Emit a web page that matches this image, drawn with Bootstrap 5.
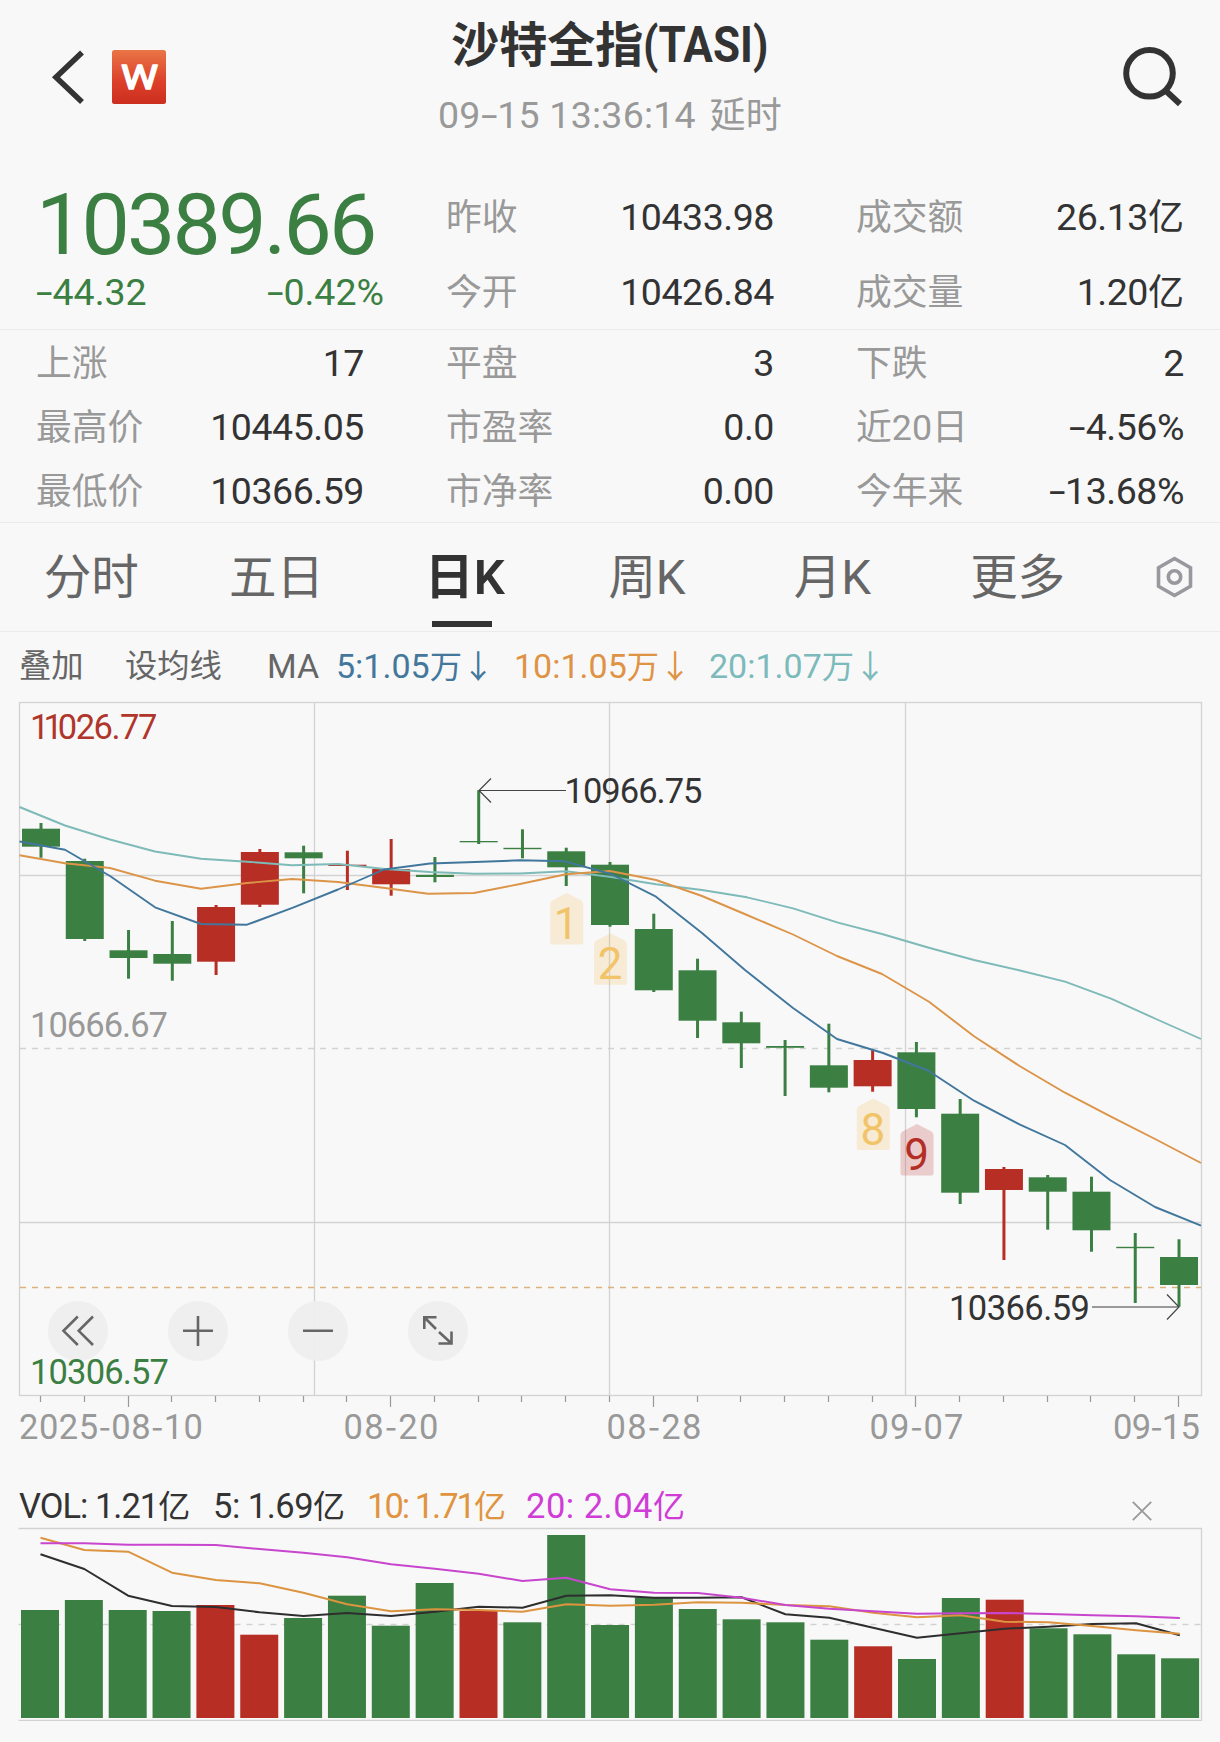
<!DOCTYPE html>
<html lang="zh-CN">
<head>
<meta charset="utf-8">
<meta name="viewport" content="width=device-width, initial-scale=1">
<title>沙特全指(TASI)</title>
<link href="https://cdn.jsdelivr.net/npm/bootstrap@5.3.0/dist/css/bootstrap.min.css" rel="stylesheet">
<style>
  body { background:#f8f8f8; color:#333; font-family:Roboto,"Noto Sans CJK SC",sans-serif; width:1220px; height:1742px; overflow:hidden; }
  svg { display:block; }
  svg text { font-family:Roboto,"Noto Sans CJK SC",sans-serif; }
  .hy { display:inline-block; width:.44em; text-align:center; letter-spacing:0; transform:scaleX(1.6); }
  .topbar { height:160px; padding:0 36px; }
  .side { width:220px; height:154px; }
  .side.back { padding-left:12px; }
  .idx-title { font-size:48px; font-weight:700; line-height:60px; margin-top:16px; white-space:nowrap; }
  .idx-title .lat { display:inline-block; transform:scaleX(.88); transform-origin:0 50%; margin-right:-17px; font-size:50px; line-height:50px; }
  .idx-time { font-size:37.5px; line-height:48px; margin-top:15px; color:#999; letter-spacing:.25px; white-space:nowrap; }
  .cjk36 { font-size:36px; }
  .idx-time .cjk36 { margin-left:4px; }
  .quote { height:170px; padding:0 36px; gap:82px; border-bottom:1.5px solid #ebebeb; }
  .quote > div, .facts > div { flex:1 1 0; min-width:0; }
  .price { font-size:86px; line-height:86px; letter-spacing:-2.8px; margin:22px 0 0 0; }
  .chg { font-size:37.5px; line-height:48px; margin-right:-20px; }
  .up-green { color:#3b7f43; }
  .kv { font-size:37.5px; white-space:nowrap; letter-spacing:-.45px; }
  .kv .k, .kv .cjk36 { letter-spacing:0; }
  .kv .k { font-size:35.8px; color:#999; padding-top:3px; }
  .quote .kv { height:75px; }
  .quote .kvs { padding-top:20px; }
  .facts { height:193px; padding:0 36px; gap:82px; border-bottom:1.5px solid #ebebeb; }
  .facts .kv { height:64px; }
  .facts .kvs { padding-top:1px; }
  .facts .kv .k { padding-top:4px; }
  .ktabs { height:109px; border-bottom:1.5px solid #ebebeb; color:#666; font-size:47.5px; }
  .ktabs .nav-link { color:#666; padding:0; width:185.3px; text-align:center; line-height:110px; height:108px; position:relative; left:-1.5px; white-space:nowrap; }
  .ktabs .nav-link.active { color:#333; font-weight:600; font-size:49px; padding-left:6px; }
  .ktabs .nav-link.active::after { content:""; position:absolute; left:50%; margin-left:-30px; bottom:4px; width:60px; height:6px; background:#333; }
  .malegend { height:68px; font-size:34px; color:#666; padding-left:19px; white-space:nowrap; }
  .malegend .zh { font-size:32.3px; }
  .vollegend { height:61px; font-size:34.5px; padding:22px 68px 0 19px; margin-top:-1px; white-space:nowrap; }
  .vollegend .zh { font-size:32px; }
  .vollegend svg { position:relative; top:4px; }
</style>
</head>
<body>
<header class="topbar d-flex justify-content-between">
  <div class="side back d-flex align-items-center">
    <svg width="120" height="60" viewBox="48 47 120 60">
      <defs><linearGradient id="wg" x1="0" y1="0" x2="0" y2="1"><stop offset="0" stop-color="#ea7546"/><stop offset=".6" stop-color="#db3f29"/><stop offset="1" stop-color="#cd2e1f"/></linearGradient></defs>
      <path d="M82 52.500L56 77.200L82 102" fill="none" stroke="#333" stroke-width="5.600"/>
      <rect x="112" y="50" width="54" height="54" rx="2.500" fill="url(#wg)"/>
      <text x="121" y="89" font-size="34" font-weight="400" fill="#fff" stroke="#fff" stroke-width="1.500" stroke-linejoin="round" textLength="37" lengthAdjust="spacingAndGlyphs">W</text>
    </svg>
  </div>
  <div class="text-center">
    <div class="idx-title">沙特全指<span class="lat">(TASI)</span></div>
    <div class="idx-time">09<span class="hy">-</span>15 13:36:14 <span class="cjk36">延时</span></div>
  </div>
  <div class="side d-flex align-items-center justify-content-end">
    <svg width="62" height="62" viewBox="1123 46 62 62" fill="none" stroke="#333" stroke-width="6"><circle cx="1150.500" cy="73.300" r="23.300"/><path d="M1166.500 90.500L1181 104"/></svg>
  </div>
</header>

<section class="quote d-flex">
  <div class="up-green">
    <div class="price">10389.66</div>
    <div class="chg d-flex justify-content-between"><span><span class="hy">-</span>44.32</span><span><span class="hy">-</span>0.42%</span></div>
  </div>
  <div class="kvs">
    <div class="kv d-flex justify-content-between align-items-center"><span class="k">昨收</span><span>10433.98</span></div>
    <div class="kv d-flex justify-content-between align-items-center"><span class="k">今开</span><span>10426.84</span></div>
  </div>
  <div class="kvs">
    <div class="kv d-flex justify-content-between align-items-center"><span class="k">成交额</span><span>26.13<span class="cjk36">亿</span></span></div>
    <div class="kv d-flex justify-content-between align-items-center"><span class="k">成交量</span><span>1.20<span class="cjk36">亿</span></span></div>
  </div>
</section>

<section class="facts d-flex">
  <div class="kvs">
    <div class="kv d-flex justify-content-between align-items-center"><span class="k">上涨</span><span>17</span></div>
    <div class="kv d-flex justify-content-between align-items-center"><span class="k">最高价</span><span>10445.05</span></div>
    <div class="kv d-flex justify-content-between align-items-center"><span class="k">最低价</span><span>10366.59</span></div>
  </div>
  <div class="kvs">
    <div class="kv d-flex justify-content-between align-items-center"><span class="k">平盘</span><span>3</span></div>
    <div class="kv d-flex justify-content-between align-items-center"><span class="k">市盈率</span><span>0.0</span></div>
    <div class="kv d-flex justify-content-between align-items-center"><span class="k">市净率</span><span>0.00</span></div>
  </div>
  <div class="kvs">
    <div class="kv d-flex justify-content-between align-items-center"><span class="k">下跌</span><span>2</span></div>
    <div class="kv d-flex justify-content-between align-items-center"><span class="k">近20日</span><span><span class="hy">-</span>4.56%</span></div>
    <div class="kv d-flex justify-content-between align-items-center"><span class="k">今年来</span><span><span class="hy">-</span>13.68%</span></div>
  </div>
</section>

<nav class="ktabs nav flex-nowrap align-items-center">
  <a class="nav-link">分时</a>
  <a class="nav-link">五日</a>
  <a class="nav-link active">日K</a>
  <a class="nav-link">周K</a>
  <a class="nav-link">月K</a>
  <a class="nav-link">更多</a>
  <svg class="ms-auto me-4" width="38" height="44" viewBox="1158.500 555 38 44" fill="none" stroke="#98989e" overflow="visible"><path d="M1175 558.500L1191 567.800V586.200L1175 595.500L1159 586.200V567.800Z" stroke-width="3.600"/><circle cx="1175" cy="577" r="6.200" stroke-width="3.600"/></svg>
</nav>

<div class="malegend d-flex align-items-center">
  <span class="zh" style="width:106px">叠加</span>
  <span class="zh" style="width:142px">设均线</span>
  <span style="width:69px">MA</span>
  <span style="width:178px;color:#44779c">5:1.05<span class="zh">万↓</span></span>
  <span style="width:195px;color:#df9345">10:1.05<span class="zh">万↓</span></span>
  <span style="color:#7cbabb">20:1.07<span class="zh">万↓</span></span>
</div>

<svg id="kline" width="1220" height="766" viewBox="0 700 1220 766" fill="none">
  <g stroke="#d2d2d2" stroke-width="1.300">
    <rect x="19.500" y="702.500" width="1182" height="693"/>
    <path d="M314.500 702V1395M609.500 702V1395M905.500 702V1395M20 875.500H1201M20 1222.500H1201"/>
    <path d="M20 1048.500H1201" stroke-dasharray="6 6"/>
  </g>
  <path d="M20 1287.500H1201" stroke="#dcb27c" stroke-width="1.300" stroke-dasharray="6 6"/>
  <g id="candles"></g>
  <g stroke-width="1.900" stroke-linejoin="round">
    <polyline stroke="#7dbab8" points="19.5,807 65,825.5 110,839.5 155,851.5 201,858.7 247,861.7 292,865.3 338,864 385,869 430,872 474,873.7 520,873.5 566,871.3 611,877 656,884.3 702,890 747,897.3 793,908.3 838,922.7 882,934 928,947.5 974,960 1020,970.5 1065,981.7 1111,998.7 1156,1019 1201,1039"/>
    <polyline stroke="#dc9448" points="19.5,855.3 65,863.3 110,868 155,880.7 201,888.7 247,883 292,879 338,882 385,888 428,893.7 474,893 520,884 566,874.3 610,871 656,880 702,896 747,915 793,934.5 837,956 882,974 929,1001.700 974,1036.300 1020,1066.300 1065,1092.700 1111,1116.700 1156,1139.500 1201,1163"/>
    <polyline stroke="#42779d" points="19.5,841.5 65,849.7 110,876 155,907.3 201,924 247,924.7 293,907.7 338,889.5 384,869.5 430,863.5 475,862 520,860.3 565,861.3 611,874 656,896.7 702,933 745,970 793,1008 837,1039 883,1053 928,1070.500 974,1100.700 1020,1124.700 1065,1145 1110,1180 1155,1207 1201,1225.700"/>
  </g>
  <g id="marks" font-size="44" text-anchor="middle"></g>
  <g stroke="#444" stroke-width="1.200">
    <path d="M566 790.500H479M491 778.500L479 790.500L491 802.500"/>
    <path d="M1092 1307H1179" stroke="#999" stroke-width="2"/>
    <path d="M1167 1294.500L1179 1307L1167 1319.500"/>
  </g>
  <g fill="#eee" fill-opacity=".95"><circle cx="78" cy="1331" r="30"/><circle cx="198" cy="1331" r="30"/><circle cx="318" cy="1331" r="30"/><circle cx="438" cy="1331" r="30"/></g>
  <g stroke="#666" stroke-width="2.600">
    <path d="M77.800 1316.500L63.500 1330.800L77.800 1345M93 1316.500L78.700 1330.800L93 1345"/>
    <path d="M183 1330.800H213M198 1316V1346M303 1330.800H333"/>
    <path d="M424.300 1329V1317.300H436.500M424.500 1317.500L436 1329M451.500 1331.500V1343.500H438.500M439 1332L451.300 1343.300"/>
  </g>
  <g font-size="34.500">
    <text x="30" y="739" fill="#b0352b" dx="0 -6 -5 -1.500 -1.500 -1.500 -.500 -1.500">11026.77</text>
    <text x="30" y="1037" fill="#999" textLength="138">10666.67</text>
    <text x="30" y="1384" fill="#3b7f43" textLength="139">10306.57</text>
    <text x="564.500" y="803" fill="#333" textLength="138">10966.75</text>
    <text x="949" y="1320" fill="#333" textLength="141">10366.59</text>
  </g>
  <g id="axis" font-size="34.500" fill="#999"></g>
</svg>

<div class="vollegend d-flex align-items-center">
  <span style="width:194px;letter-spacing:-1px">VOL: 1.21<span class="zh">亿</span></span>
  <span style="width:154px;letter-spacing:-.5px">5: 1.69<span class="zh">亿</span></span>
  <span style="width:159px;letter-spacing:-2px;color:#e0943f">10: 1.71<span class="zh">亿</span></span>
  <span style="letter-spacing:.5px;color:#cf3dd6">20: 2.04<span class="zh">亿</span></span>
  <svg class="ms-auto" width="20" height="20" viewBox="0 0 20 20" stroke="#999" stroke-width="1.800"><path d="M.8 .8L19.200 19.200M19.200 .8L.8 19.200"/></svg>
</div>

<svg id="volume" width="1220" height="197" viewBox="0 1526 1220 197" fill="none">
  <path d="M18.500 1528.500H1201.500V1720.300H18.500" stroke="#d2d2d2" stroke-width="1.300"/>
  <path d="M18.500 1624.500H1201" stroke="#d2d2d2" stroke-width="1.300" stroke-dasharray="6 6"/>
  <g id="bars"></g>
  <g id="vlines" stroke-width="2" stroke-linejoin="round"></g>
</svg>

<script src="https://cdn.jsdelivr.net/npm/bootstrap@5.3.0/dist/js/bootstrap.bundle.min.js"></script>
<script>
  const G = '#3b7f43', R = '#b72e25';
  const red = new Set([4, 5, 7, 8, 19, 22]);
  // high, body top, body bottom, low
  const k = [[823,828.7,846.7,857.7],[858.7,861,939,941],[930,950.3,958,978.7],[921,954,963.7,980.7],[905,907,961.7,975],[849,852,904.7,907],[845.7,852.3,858.3,893.3],[850.7,864.7,866,890],[839,869,884.3,895.7],[857,874.8,877,882.3],[790.3,841,842.3,844],[829.3,847.8,849.2,858.3],[847.7,851.3,867.3,886],[862,864.7,925,926.7],[913.7,929,990.3,992],[958.7,970.3,1020.7,1038],[1011.7,1022.3,1043.3,1068],[1040,1046,1047.8,1096],[1023.7,1065.3,1087.7,1092.3],[1050,1060,1086.3,1091.7],[1042,1052.3,1109,1117.3],[1099,1113.7,1192.7,1204],[1167,1169,1190,1260],[1175,1177.3,1191.7,1229.7],[1176.7,1191.7,1230.3,1251.7],[1233,1246.8,1248.2,1303],[1239.3,1257,1285,1306.7]];
  let s = '', ax = '';
  k.forEach((c, i) => {
    const x = 41 + i * 43.77, f = red.has(i) ? R : G, rx = Math.round(x);
    s += `<rect x="${x-1.5}" y="${c[0]}" width="3" height="${c[3]-c[0]}" fill="${f}"/><rect x="${x-19}" y="${c[1]}" width="38" height="${c[2]-c[1]}" fill="${f}"/>`;
    ax += `<path d="M${rx-.5} 1396V${i % 6 === 2 ? 1407 : 1402}" stroke="#999" stroke-width="1.2"/>`;
  });
  candles.innerHTML = s;
  [['2025-08-10',19,184],['08-20',343.5,95],['08-28',606.5,95],['09-07',869.5,94],['09-15',1113,87]].forEach(d => {
    ax += `<text x="${d[1]}" y="1439" textLength="${d[2]}">${d[0].replace(/-/g, '<tspan font-family="Noto Sans CJK SC">-</tspan>')}</text>`;
  });
  axis.innerHTML = ax;
  // sequence flags: label, centre x, apex y
  marks.innerHTML = [['1',566.7,893],['2',610.5,933.3],['8',873.3,1098.6],['9',917,1124]].map(m => {
    const n = m[0] === '9', [t, x, y] = m;
    return `<path d="M${x} ${y}L${x+14.5} ${y+7.500}Q${x+16.5} ${y+9} ${x+16.5} ${y+11}V${y+49.5}Q${x+16.5} ${y+51.5} ${x+14.5} ${y+51.5}H${x-14.5}Q${x-16.5} ${y+51.5} ${x-16.5} ${y+49.5}V${y+11}Q${x-16.5} ${y+9} ${x-14.5} ${y+7.500}Z" fill="${n ? '#c03038' : '#f7b84a'}" fill-opacity="${n ? .22 : .2}"/><text x="${x-.5}" y="${y+46}" fill="${n ? '#b32f26' : '#f2c46a'}">${t}</text>`;
  }).join('');

  const vol = [1610,1600,1610,1611,1605,1634.7,1618,1595.7,1625.7,1583,1611,1622.3,1535,1625,1597.3,1609,1619.3,1622.3,1639.7,1646.3,1659,1598,1599.7,1628.3,1634.3,1654.3,1658.3];
  const vred = new Set([4, 5, 10, 19, 22]);
  bars.innerHTML = vol.map((y, i) => `<rect x="${21 + i * 43.85}" y="${y}" width="38" height="${1718 - y}" fill="${vred.has(i) ? R : G}"/>`).join('');
  const lines = {
    '#2e2e2e': [223,267,347,378,381,397,408,399,408,395,380,383,347,346,353,353,352,403,413,443,473,460,446,440,432,430,466],
    '#dc9440': [173,210,215,278,300,310,338,373,394,388,390,395,373,377,374,367,368,375,379,398,412,406,425,427,438,451,461],
    '#c746cd': [190,190,194,194,195,207,218,232,253,266,281,303,293,328,338,339,353,375,386,394,401,400,399,402,406,409,414]
  };
  vlines.innerHTML = Object.entries(lines).map(([c, a]) => `<polyline stroke="${c}" points="${a.map((v, i) => (40.5 + i * 43.82).toFixed(1) + ',' + (1480 + v / 3).toFixed(1)).join(' ')}"/>`).join('');
</script>
</body>
</html>
